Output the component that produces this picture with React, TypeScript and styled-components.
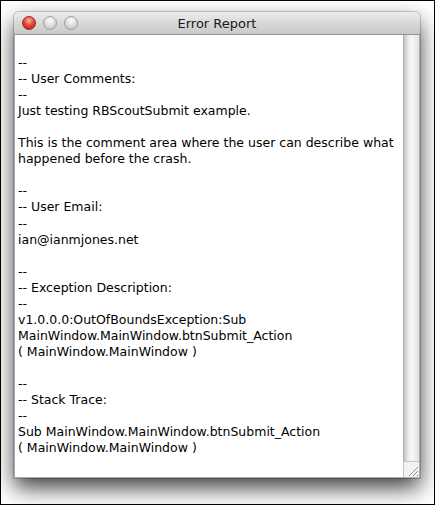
import React from "react";
import styled, { createGlobalStyle } from "styled-components";

const reportLines = [
  "",
  "--",
  "-- User Comments:",
  "--",
  "Just testing RBScoutSubmit example.",
  "",
  "This is the comment area where the user can describe what",
  "happened before the crash.",
  "",
  "--",
  "-- User Email:",
  "--",
  "ian@ianmjones.net",
  "",
  "--",
  "-- Exception Description:",
  "--",
  "v1.0.0.0:OutOfBoundsException:Sub",
  "MainWindow.MainWindow.btnSubmit_Action",
  "( MainWindow.MainWindow )",
  "",
  "--",
  "-- Stack Trace:",
  "--",
  "Sub MainWindow.MainWindow.btnSubmit_Action",
  "( MainWindow.MainWindow )",
];

const GlobalStyle = createGlobalStyle`
  html, body {
    margin: 0;
    padding: 0;
    background: #fff;
  }
`;

const Frame = styled.div`
  width: 435px;
  height: 505px;
  box-sizing: border-box;
  border: 1px solid #000;
  padding: 11px 0 0 13px;
  background: #fff;
  overflow: hidden;
`;

const Window = styled.div`
  width: 406px;
  height: 466px;
  display: flex;
  flex-direction: column;
  border-radius: 5px 5px 0 0;
  background: #e4e4e4;
  box-shadow: 0 10px 22px rgba(0, 0, 0, 0.75), 0 0 0 1px rgba(0, 0, 0, 0.18);
`;

const TitleBar = styled.div`
  height: 22px;
  flex: none;
  display: grid;
  grid-template-columns: 1fr auto 1fr;
  align-items: center;
  padding: 0 8px;
  border-radius: 5px 5px 0 0;
  background: linear-gradient(#ededed, #d6d6d6 55%, #c9c9c9);
  border-bottom: 1px solid #8e97a4;
`;

const Lights = styled.div`
  display: flex;
  gap: 7px;
`;

const Light = styled.span<{ $red?: boolean }>`
  width: 14px;
  height: 14px;
  border-radius: 50%;
  box-sizing: border-box;
  border: 1px solid ${(p) => (p.$red ? "#9a2a22" : "#a0a0a0")};
  background: ${(p) =>
    p.$red
      ? "radial-gradient(circle at 50% 30%, #ffb0a6 0, #e44a3c 45%, #b41e12 100%)"
      : "radial-gradient(circle at 50% 30%, #ffffff 0, #e0e0e0 45%, #bcbcbc 100%)"};
`;

const Title = styled.div`
  font-family: "DejaVu Sans", sans-serif;
  font-size: 13px;
  color: #1a1a1a;
`;

const Body = styled.div`
  flex: 1;
  display: flex;
  min-height: 0;
`;

const TextArea = styled.div`
  flex: 1;
  background: #fff;
  border-left: 1px solid #9fadc2;
  border-bottom: 1px solid #9fadc2;
  padding: 4px 0 0 3px;
  font-family: "DejaVu Sans", sans-serif;
  font-size: 12.5px;
  line-height: 16.05px;
  color: #000;
  white-space: pre;
  overflow: hidden;
`;

const ScrollColumn = styled.div`
  width: 16px;
  flex: none;
  display: flex;
  flex-direction: column;
  border-right: 1px solid #9fadc2;
  border-bottom: 1px solid #9fadc2;
`;

const Track = styled.div`
  flex: 1;
  background: linear-gradient(90deg, #c4c4c4, #ececec 30%, #f7f7f7 55%, #e2e2e2 100%);
  border-left: 1px solid #b0b0b0;
`;

const Grip = styled.div`
  height: 15px;
  flex: none;
  background: #f2f2f2;
  border-left: 1px solid #c2c2c2;
  border-top: 1px solid #c2c2c2;
  display: flex;
  align-items: flex-end;
  justify-content: flex-end;
`;

export default function App() {
  return (
    <>
      <GlobalStyle />
      <Frame>
        <Window>
          <TitleBar>
            <Lights>
              <Light $red />
              <Light />
              <Light />
            </Lights>
            <Title>Error Report</Title>
            <span />
          </TitleBar>
          <Body>
            <TextArea>
              {reportLines.map((line, i) => (
                <div key={i}>{line || " "}</div>
              ))}
            </TextArea>
            <ScrollColumn>
              <Track />
              <Grip>
                <svg width="12" height="12" viewBox="0 0 12 12">
                  <path d="M11 2L2 11M11 6L6 11M11 10L10 11" stroke="#8a8a8a" strokeWidth="1" />
                  <path d="M11 3L3 11M11 7L7 11" stroke="#fff" strokeWidth="1" />
                </svg>
              </Grip>
            </ScrollColumn>
          </Body>
        </Window>
      </Frame>
    </>
  );
}
